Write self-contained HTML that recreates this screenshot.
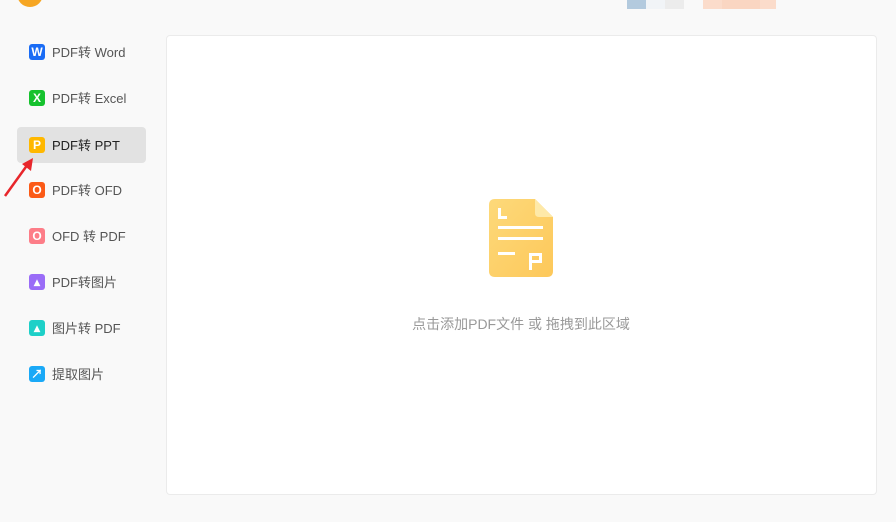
<!DOCTYPE html>
<html><head><meta charset="utf-8"><style>
body{margin:0;width:896px;height:522px;background:#f9f9f9;position:relative;overflow:hidden;font-family:"Liberation Sans","Noto Sans CJK SC",sans-serif}
.blk{position:absolute;top:0;height:9px}
.main{position:absolute;left:166px;top:35px;width:709px;height:458px;background:#fff;border:1px solid #ebebeb;border-radius:4px}
.item{position:absolute;left:17px;width:129px;height:36px;border-radius:4px}
.item.act{background:#e2e2e2}
.ic{position:absolute;left:12px;top:10px;width:16px;height:16px;border-radius:3px;color:#fff;font-size:12px;font-weight:bold;text-align:center;line-height:16px}
.tx{position:absolute;left:35px;top:10px;font-size:13px;color:#555;line-height:18px}
.act .tx{color:#222}
.hint{position:absolute;top:314px;text-align:center;font-size:14px;color:#999}
</style></head><body>
<div style="position:absolute;left:17px;top:-19px;width:26px;height:26px;border-radius:50%;background:#f6a623"></div>
<div class="blk" style="left:627px;width:19px;background:#b3cade"></div>
<div class="blk" style="left:646px;width:19px;background:#f1f4f7"></div>
<div class="blk" style="left:665px;width:19px;background:#ececec"></div>
<div class="blk" style="left:703px;width:19px;background:#fbdccb"></div>
<div class="blk" style="left:722px;width:38px;background:#fad6c2"></div>
<div class="blk" style="left:760px;width:16px;background:#fbdccb"></div>

<div class="item" style="top:34px"><div class="ic" style="background:#1a6cf5">W</div><div class="tx">PDF转 Word</div></div>
<div class="item" style="top:80px"><div class="ic" style="background:#16c22e">X</div><div class="tx">PDF转 Excel</div></div>
<div class="item act" style="top:127px"><div class="ic" style="background:#ffb800">P</div><div class="tx">PDF转 PPT</div></div>
<div class="item" style="top:172px"><div class="ic" style="background:#fb5a17">O</div><div class="tx">PDF转 OFD</div></div>
<div class="item" style="top:218px"><div class="ic" style="background:#fd7d88">O</div><div class="tx">OFD 转 PDF</div></div>
<div class="item" style="top:264px"><div class="ic" style="background:#9a6cf7">▴</div><div class="tx">PDF转图片</div></div>
<div class="item" style="top:310px"><div class="ic" style="background:#1ed0c8">▴</div><div class="tx">图片转 PDF</div></div>
<div class="item" style="top:356px"><div class="ic" style="background:#1aa9f7">↗</div><div class="tx">提取图片</div></div>

<svg style="position:absolute;left:0;top:150px" width="40" height="50"><line x1="5" y1="46" x2="28" y2="14" stroke="#e8262b" stroke-width="2.5"/><polygon points="33,8 22,14 31,21" fill="#e8262b"/></svg>

<div class="main"></div>
<svg style="position:absolute;left:486px;top:197px" width="72" height="86">
<defs><linearGradient id="g" x1="0" y1="0" x2="1" y2="1"><stop offset="0" stop-color="#fdd97a"/><stop offset="1" stop-color="#fdc85a"/></linearGradient></defs>
<path d="M9 2H49L67 20V74Q67 80 61 80H9Q3 80 3 74V8Q3 2 9 2Z" fill="url(#g)"/>
<path d="M49 2L67 20H53Q49 20 49 16Z" fill="#fee9a8"/>
<g fill="#fff"><rect x="12" y="11" width="3" height="11"/><rect x="12" y="19" width="9" height="3"/>
<rect x="12" y="29" width="45" height="3"/><rect x="12" y="40" width="45" height="3"/><rect x="12" y="55" width="17" height="3"/>
<path d="M43 56H56V66H46V73H43ZM46 59V63H53V59Z"/></g></svg>
<div class="hint" style="left:166px;width:710px">点击添加PDF文件 或 拖拽到此区域</div>
</body></html>
